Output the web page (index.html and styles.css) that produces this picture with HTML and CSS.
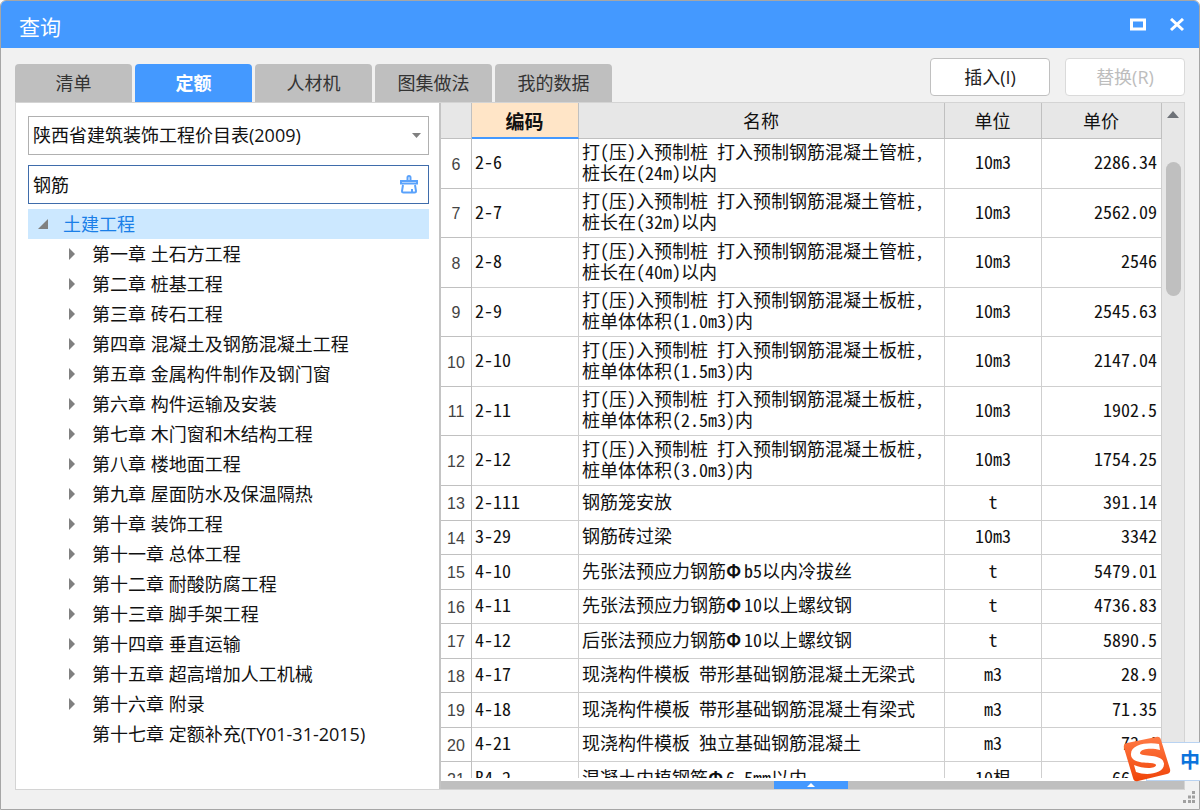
FILE: index.html
```html
<!DOCTYPE html>
<html lang="zh-CN">
<head>
<meta charset="utf-8">
<title>查询</title>
<link rel="stylesheet" href="styles.css">
</head>
<body>
<div class="window">
  <header class="titlebar">
    <h1>查询</h1>
    <div class="window-actions">
      <button type="button" aria-label="最大化"><svg width="16" height="14" viewBox="0 0 16 14"><rect x="1.5" y="2" width="13" height="9" fill="none" stroke="#fff" stroke-width="3"/></svg></button>
      <button type="button" aria-label="关闭"><svg width="16" height="14" viewBox="0 0 16 14"><path d="M2 1l12 11M14 1L2 12" fill="none" stroke="#fff" stroke-width="3"/></svg></button>
    </div>
  </header>

  <div class="toolbar">
    <nav class="tabs">
      <button type="button" class="tab">清单</button>
      <button type="button" class="tab active">定额</button>
      <button type="button" class="tab">人材机</button>
      <button type="button" class="tab">图集做法</button>
      <button type="button" class="tab">我的数据</button>
    </nav>
    <div class="commands">
      <button type="button" class="command">插入(I)</button>
      <button type="button" class="command" disabled>替换(R)</button>
    </div>
  </div>

  <main class="panel">
    <aside class="sidebar">
      <div class="field">
        <select aria-label="定额库"><option>陕西省建筑装饰工程价目表(2009)</option></select>
        <svg class="caret" width="9" height="5" viewBox="0 0 9 5"><path d="M0 0h9L4.500 5z" fill="#808080"/></svg>
      </div>
      <div class="field search">
        <input type="text" value="钢筋" aria-label="搜索">
        <button type="button" class="clear" aria-label="清除"><svg width="18" height="19" viewBox="0 0 18 19" fill="none" stroke="#5aa2fb" stroke-width="2"><path d="M7.500 5V2.500q0-1.500 1.500-1.500t1.500 1.500V5M1 6h16v2.500H1zM3 10l-1 6q0 1.500 1.500 1.500h11Q16 17.500 16 16l-1-6M12 14v3"/></svg></button>
      </div>
      <ul class="tree">
        <li class="root"><svg width="10" height="10" viewBox="0 0 10 10"><path d="M10 0v10H0z" fill="#808080"/></svg>土建工程</li>
        <li><i class="arrow"></i>第一章 土石方工程</li>
        <li><i class="arrow"></i>第二章 桩基工程</li>
        <li><i class="arrow"></i>第三章 砖石工程</li>
        <li><i class="arrow"></i>第四章 混凝土及钢筋混凝土工程</li>
        <li><i class="arrow"></i>第五章 金属构件制作及钢门窗</li>
        <li><i class="arrow"></i>第六章 构件运输及安装</li>
        <li><i class="arrow"></i>第七章 木门窗和木结构工程</li>
        <li><i class="arrow"></i>第八章 楼地面工程</li>
        <li><i class="arrow"></i>第九章 屋面防水及保温隔热</li>
        <li><i class="arrow"></i>第十章 装饰工程</li>
        <li><i class="arrow"></i>第十一章 总体工程</li>
        <li><i class="arrow"></i>第十二章 耐酸防腐工程</li>
        <li><i class="arrow"></i>第十三章 脚手架工程</li>
        <li><i class="arrow"></i>第十四章 垂直运输</li>
        <li><i class="arrow"></i>第十五章 超高增加人工机械</li>
        <li><i class="arrow"></i>第十六章 附录</li>
        <li><i class="arrow leaf"></i>第十七章 定额补充(TY01-31-2015)</li>
      </ul>
    </aside>

    <section class="results">
      <div class="grid-area">
        <div class="table-clip">
          <table>
            <colgroup><col class="c-num"><col class="c-code"><col><col class="c-unit"><col class="c-price"></colgroup>
            <thead><tr><th></th><th class="sorted">编码</th><th>名称</th><th>单位</th><th>单价</th></tr></thead>
            <tbody class="tall">
              <tr><th>6</th><td>2-6</td><td>打(压)入预制桩 打入预制钢筋混凝土管桩,<br>桩长在(24m)以内</td><td>10m3</td><td>2286.34</td></tr>
              <tr><th>7</th><td>2-7</td><td>打(压)入预制桩 打入预制钢筋混凝土管桩,<br>桩长在(32m)以内</td><td>10m3</td><td>2562.09</td></tr>
              <tr><th>8</th><td>2-8</td><td>打(压)入预制桩 打入预制钢筋混凝土管桩,<br>桩长在(40m)以内</td><td>10m3</td><td>2546</td></tr>
              <tr><th>9</th><td>2-9</td><td>打(压)入预制桩 打入预制钢筋混凝土板桩,<br>桩单体体积(1.0m3)内</td><td>10m3</td><td>2545.63</td></tr>
              <tr><th>10</th><td>2-10</td><td>打(压)入预制桩 打入预制钢筋混凝土板桩,<br>桩单体体积(1.5m3)内</td><td>10m3</td><td>2147.04</td></tr>
              <tr><th>11</th><td>2-11</td><td>打(压)入预制桩 打入预制钢筋混凝土板桩,<br>桩单体体积(2.5m3)内</td><td>10m3</td><td>1902.5</td></tr>
              <tr><th>12</th><td>2-12</td><td>打(压)入预制桩 打入预制钢筋混凝土板桩,<br>桩单体体积(3.0m3)内</td><td>10m3</td><td>1754.25</td></tr>
            </tbody>
            <tbody class="short">
              <tr><th>13</th><td>2-111</td><td>钢筋笼安放</td><td>t</td><td>391.14</td></tr>
              <tr><th>14</th><td>3-29</td><td>钢筋砖过梁</td><td>10m3</td><td>3342</td></tr>
              <tr><th>15</th><td>4-10</td><td>先张法预应力钢筋<b>Φ</b>b5以内冷拔丝</td><td>t</td><td>5479.01</td></tr>
              <tr><th>16</th><td>4-11</td><td>先张法预应力钢筋<b>Φ</b>10以上螺纹钢</td><td>t</td><td>4736.83</td></tr>
              <tr><th>17</th><td>4-12</td><td>后张法预应力钢筋<b>Φ</b>10以上螺纹钢</td><td>t</td><td>5890.5</td></tr>
              <tr><th>18</th><td>4-17</td><td>现浇构件模板 带形基础钢筋混凝土无梁式</td><td>m3</td><td>28.9</td></tr>
              <tr><th>19</th><td>4-18</td><td>现浇构件模板 带形基础钢筋混凝土有梁式</td><td>m3</td><td>71.35</td></tr>
              <tr><th>20</th><td>4-21</td><td>现浇构件模板 独立基础钢筋混凝土</td><td>m3</td><td>73.4</td></tr>
              <tr><th>21</th><td>B4-2</td><td>混凝土内植钢筋<b>Φ</b>6.5mm以内</td><td>10根</td><td>66.14</td></tr>
            </tbody>
          </table>
        </div>
        <div class="scrollbar">
          <svg width="12" height="7" viewBox="0 0 12 7"><path d="M6 0l6 7H0z" fill="#6e7278"/></svg>
          <div class="thumb"></div>
        </div>
      </div>
      <div class="splitter"><button type="button" aria-label="展开"><svg width="8" height="4" viewBox="0 0 8 4"><path d="M4 0l4 4H0z" fill="#fff"/></svg></button></div>
    </section>
  </main>

  <footer class="statusbar">
    <svg width="13" height="13" viewBox="0 0 13 13" fill="#a0a0a0"><path d="M9 0h3v3H9zM5 4.500h3v3H5zM9 4.500h3v3H9zM0 9h3v3H0zM5 9h3v3H5zM9 9h3v3H9z"/></svg>
  </footer>
</div>

<div class="ime">
  <span>中</span>
  <svg class="ime-logo" width="48" height="46" viewBox="0 0 48 46">
    <defs><linearGradient id="flame" x1="0" y1="0" x2="0" y2="1"><stop offset="0" stop-color="#ff7a45"/><stop offset="1" stop-color="#f04408"/></linearGradient></defs>
    <path d="M4 7L33 1q4-1 5 3l9 29q1 4-3 5l-29 7q-4 1-5-3L1 12q-1-4 3-5z" fill="url(#flame)"/>
    <path d="M36 8l1 6C30 12 18 12 17 17c-1 4 24 0 24 11 0 10-18 12-28 8l-2-7c9 4 22 4 22 0 0-4-24 1-25-10C7 8 25 6 36 8z" fill="#fff"/>
  </svg>
</div>
</body>
</html>
```

FILE: styles.css
```css
* { box-sizing: border-box; }

body {
  margin: 0;
  background: #fff;
  color: #111;
  font: 18px/30px "Open Sans", "Noto Sans CJK SC", sans-serif;
  overflow: hidden;
}

button, input, select { font: inherit; color: inherit; margin: 0; }
button { border: 0; padding: 0; }
svg { display: block; }

.window {
  display: flex;
  flex-direction: column;
  height: 100vh;
  border: 1px solid #a6a6a6;
  border-radius: 6px 6px 0 0;
  background: #f1f1f1;
  overflow: hidden;
}

.titlebar {
  display: flex;
  flex: none;
  align-items: center;
  justify-content: space-between;
  height: 47px;
  padding: 0 14px 0 18px;
  background: #4499ff;
  color: #fff;
}
.titlebar h1 { margin: 4px 0 0; font-size: 21px; font-weight: 400; }
.window-actions { display: flex; gap: 23px; }
.window-actions button { background: none; }

.toolbar {
  display: flex;
  flex: none;
  justify-content: space-between;
  align-items: flex-end;
  height: 54px;
  padding: 0 14px;
}
.tabs { display: flex; gap: 3px; }
.tab {
  width: 117px;
  height: 38px;
  border-radius: 4px 4px 0 0;
  background: #bfbfbf;
  color: #333;
}
.tab.active { background: #4499ff; color: #fff; font-weight: 700; }
.commands { display: flex; gap: 15px; padding-bottom: 6px; }
.command {
  width: 120px;
  height: 38px;
  border: 1px solid #c0c0c0;
  border-radius: 4px;
  background: #fff;
  color: #222;
}
.command:disabled { border-color: #dadada; color: #bdbdbd; }

.panel {
  display: flex;
  flex: 1;
  min-height: 0;
  margin: 0 14px;
  border: 1px solid #d4d4d4;
  background: #fff;
}

.sidebar { flex: 0 0 423px; padding: 13px 10px 0 12px; }
.field { position: relative; height: 39px; margin-bottom: 10px; }
.field select, .field input {
  width: 100%;
  height: 100%;
  padding: 0 4px 2px;
  border: 1px solid #b0b0b0;
  border-radius: 0;
  outline: 0;
  background: #fff;
  appearance: none;
}
.field.search { margin-bottom: 5px; }
.field input { border: 1px solid #3f6cab; }
.caret { position: absolute; right: 8px; top: 17px; }
.clear { position: absolute; right: 11px; top: 10px; background: none; }

.tree { margin: 0; padding: 0; list-style: none; }
.tree li { display: flex; align-items: center; height: 30px; padding-left: 41px; white-space: nowrap; }
.tree .root { gap: 15px; padding-left: 10px; background: #cce8ff; color: #1a7fe8; }
.arrow {
  width: 6px;
  height: 12px;
  margin-right: 17px;
  background: #808080;
  clip-path: polygon(0 0, 100% 50%, 0 100%);
}
.arrow.leaf { visibility: hidden; }

.results { display: flex; flex: 1; flex-direction: column; min-width: 0; border-left: 2px solid #c4c4c4; }
.grid-area { display: flex; flex: 1; min-height: 0; padding-bottom: 3px; }
.table-clip { flex: 1; min-width: 0; overflow: hidden; }

table { width: 100%; border-collapse: separate; border-spacing: 0; table-layout: fixed; }
.c-num { width: 31px; }
.c-code { width: 107px; }
.c-unit { width: 97px; }
.c-price { width: 120px; }
th, td {
  padding: 0 4px 4px 3px;
  border-right: 1px solid #cfcfcf;
  border-bottom: 1px solid #cfcfcf;
  font: 18px/21px "Noto Sans Mono CJK SC", "Noto Sans CJK SC", monospace;
  white-space: nowrap;
}
thead th { height: 36px; padding-bottom: 0; border-color: #c0c0c0; background: #e7e7e7; }
thead .sorted { border-bottom: 2px solid #4499ff; background: #ffe5c7; font-size: 19px; font-weight: 700; }
tbody th {
  padding: 1px 0 0;
  border-color: #c0c0c0;
  color: #444;
  font: 16px/21px "Liberation Sans", sans-serif;
  text-align: center;
}
td b { display: inline-block; width: 18px; line-height: 20px; }
td:nth-child(4) { padding-left: 4px; text-align: center; }
td:nth-child(5) { text-align: right; }
.tall tr { height: 49px; }
.tall tr:nth-child(odd) { height: 50px; }
.short tr { height: 34px; }
.short tr:nth-child(odd) { height: 35px; }

.scrollbar {
  display: flex;
  flex: 0 0 22px;
  flex-direction: column;
  align-items: center;
  gap: 44px;
  padding-top: 8px;
  background: #e7e7e7;
}
.thumb { width: 15px; height: 134px; border-radius: 8px; background: #bfbfbf; }

.splitter { display: flex; flex: none; justify-content: center; height: 8px; padding-right: 4px; background: #bfbfbf; }
.splitter button { display: flex; align-items: center; justify-content: center; width: 74px; height: 8px; background: #4499ff; }

.statusbar { display: flex; flex: none; align-items: flex-start; justify-content: flex-end; height: 19px; padding: 1px 3px 0 0; }

.ime {
  position: absolute;
  right: 0;
  bottom: 29px;
  width: 54px;
  height: 39px;
  border: 1px solid #b9d3f2;
  border-right: 0;
  background: #fff;
}
.ime span { display: block; width: 20px; margin-left: 33px; color: #0c73dc; font-size: 20px; line-height: 36px; font-weight: 700; }
.ime-logo { position: absolute; right: 29px; top: -7px; }
```
